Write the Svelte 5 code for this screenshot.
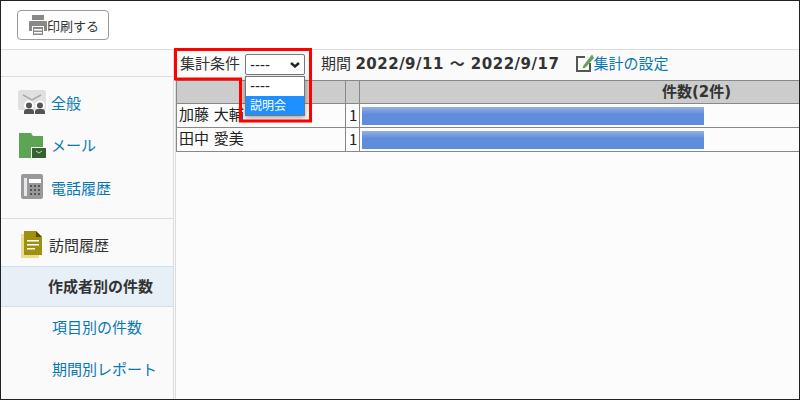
<script>
  const rows = [
    { name: '加藤 大輔', count: 1 },
    { name: '田中 愛美', count: 1 }
  ];
</script>

<div class="page">
  <header class="toolbar">
    <button type="button" class="print-button">
      <svg width="18" height="20" viewBox="0 0 18 20">
        <rect x="3" y="0" width="12" height="5" fill="#888" />
        <path d="M1 6h16a1 1 0 0 1 1 1v9h-3v-5H3v5H0V7a1 1 0 0 1 1-1z" fill="#888" />
        <path d="M4 12h10v8H4z" fill="#888" />
        <path d="M5 14h8v1.500H5zM5 17h8v1.500H5z" fill="#fff" />
      </svg>
      印刷する
    </button>
  </header>

  <div class="body">
    <aside class="sidebar">
      <div class="side-top"></div>
      <nav class="group first">
        <a class="nav-item">
          <svg class="icon" width="28" height="24" viewBox="0 0 28 24">
            <rect x="0" y="0" width="28" height="20" rx="2" fill="#e0e0e0" />
            <path d="M5 5l9 5 9-5" fill="none" stroke="#aaa" stroke-width="1.500" />
            <circle cx="11" cy="15.500" r="5" fill="#fff" />
            <circle cx="22" cy="15.500" r="5" fill="#fff" />
            <circle cx="11" cy="15.500" r="3" fill="#555" />
            <circle cx="22" cy="15.500" r="3" fill="#555" />
            <path d="M6 24v-2a3 3 0 0 1 3-3h4a3 3 0 0 1 3 3v2zM17 24v-2a3 3 0 0 1 3-3h4a3 3 0 0 1 3 3v2z" fill="#555" />
          </svg>
          全般
        </a>
        <a class="nav-item">
          <svg class="icon" width="28" height="26" viewBox="0 0 28 26">
            <path d="M1 1h12l2 3h10v22H1z" fill="#5ca552" />
            <rect x="13" y="15" width="15" height="11" fill="#fff" />
            <rect x="14" y="16" width="14" height="10" fill="#35622f" />
            <path d="M18 19l3 2 3-2" fill="none" stroke="#c5d8c2" stroke-width="1" />
          </svg>
          メール
        </a>
        <a class="nav-item">
          <svg class="icon" width="28" height="26" viewBox="0 0 28 26">
            <rect x="3" y="0" width="22" height="25" rx="2" fill="#999" />
            <rect x="6" y="4" width="3" height="18" fill="#e4e8ee" />
            <rect x="11" y="5" width="12" height="4" fill="#fff" />
            <g fill="#555">
              <rect x="12" y="11" width="2" height="2" /><rect x="16" y="11" width="2" height="2" /><rect x="20" y="11" width="2" height="2" />
              <rect x="12" y="15" width="2" height="2" /><rect x="16" y="15" width="2" height="2" /><rect x="20" y="15" width="2" height="2" />
              <rect x="12" y="19" width="2" height="2" /><rect x="16" y="19" width="2" height="2" /><rect x="20" y="19" width="2" height="2" />
            </g>
          </svg>
          電話履歴
        </a>
      </nav>
      <nav class="group">
        <div class="nav-head">
          <svg width="21" height="27" viewBox="0 0 21 27">
            <rect x="0" y="3" width="18" height="24" fill="#e9dd92" />
            <path d="M3 0h12l6 6v18H3z" fill="#a09012" />
            <path d="M15 0l6 6h-6z" fill="#5a5008" />
            <path d="M6 9h12v1.500H6zM6 13h12v1.500H6zM6 17h8v1.500H6z" fill="#fff" />
          </svg>
          訪問履歴
        </div>
        <a class="sub-item active">作成者別の件数</a>
        <a class="sub-item">項目別の件数</a>
        <a class="sub-item">期間別レポート</a>
      </nav>
    </aside>

    <main class="main">
      <div class="filter-bar">
        <label class="cond">
          <span class="label">集計条件</span>
          <span class="select-wrap">
            <select>
              <option>----</option>
              <option>説明会</option>
            </select>
            <svg class="chevron" width="10" height="6" viewBox="0 0 10 6">
              <path d="M1 1l4 3.500L9 1" fill="none" stroke="#222" stroke-width="2.400" />
            </svg>
          </span>
        </label>
        <span class="label period">期間 <b>2022/9/11 ～ 2022/9/17</b></span>
        <a class="label settings">
          <svg width="18" height="18" viewBox="0 0 18 18">
            <path d="M9 3H1v14h13V9" fill="none" stroke="#555" stroke-width="2" />
            <path d="M7.500 11.500l-1 3 3-1L18 4l-2-3.500z" fill="#5ca552" />
          </svg>
          集計の設定
        </a>
      </div>

      <table>
        <colgroup>
          <col class="c-name" />
          <col class="c-num" />
          <col />
        </colgroup>
        <thead>
          <tr><th></th><th></th><th class="total">件数(2件)</th></tr>
        </thead>
        <tbody>
          {#each rows as row}
            <tr>
              <td class="name">{row.name}</td>
              <td class="num">{row.count}</td>
              <td class="bar-cell"><div class="bar"></div></td>
            </tr>
          {/each}
        </tbody>
      </table>
    </main>
  </div>

  <!-- callouts laid over the screenshot -->
  <ul class="dropdown">
    <li class="dashes">----</li>
    <li class="selected">説明会</li>
  </ul>
  <svg class="callout" width="800" height="400" viewBox="0 0 800 400">
    <path d="M175.500 49.500H310.500V121H240.500V79H175.500Z" fill="none" stroke="#f00" stroke-width="3" />
  </svg>
</div>

<style>
  :global(body) {
    margin: 0;
  }

  .page {
    position: relative;
    box-sizing: border-box;
    width: 800px;
    height: 400px;
    overflow: hidden;
    display: flex;
    flex-direction: column;
    border: 1px solid #222;
    background: #fff;
    color: #333;
    font-family: "Noto Sans CJK JP", sans-serif;
    font-size: 15px;
  }

  .toolbar {
    flex: none;
    height: 49px;
    box-sizing: border-box;
    padding: 9px 0 0 16px;
    border-bottom: 1px solid #ddd;
  }

  .print-button {
    appearance: none;
    display: flex;
    align-items: center;
    box-sizing: border-box;
    width: 92px;
    height: 30px;
    padding: 0 0 0 11px;
    border: 1px solid #999;
    border-radius: 4px;
    background: #fff;
    color: #333;
    font: inherit;
    font-size: 13px;
  }

  .body {
    flex: 1;
    min-height: 0;
    display: flex;
  }

  .sidebar {
    flex: none;
    box-sizing: border-box;
    width: 175px;
    background: #fafafa;
    border-right: 3px double #ddd;
  }

  .side-top {
    box-sizing: border-box;
    height: 27px;
    border-bottom: 1px solid #ddd;
  }

  .group.first {
    height: 142px;
    box-sizing: border-box;
    padding-top: 4px;
    border-bottom: 1px solid #ddd;
  }

  .nav-item {
    display: flex;
    align-items: center;
    gap: 5px;
    height: 42.500px;
    padding-left: 17px;
    color: #0a78b4;
  }

  .nav-head {
    display: flex;
    align-items: center;
    gap: 7px;
    height: 47px;
    box-sizing: border-box;
    padding: 4px 0 0 20px;
  }

  .sub-item {
    display: flex;
    align-items: center;
    box-sizing: border-box;
    height: 42px;
    padding: 0 0 4px 51px;
    color: #0a78b4;
  }

  .sub-item.active {
    height: 41px;
    padding: 0 0 3px 47px;
    background: #e6f0f6;
    border-block: 1px solid #cfe0ea;
    color: #333;
    font-weight: 700;
  }

  .main {
    flex: 1;
    min-width: 0;
    background: #fcfcfc;
  }

  .filter-bar {
    display: flex;
    align-items: center;
    box-sizing: border-box;
    height: 30px;
    padding-bottom: 1px;
    background: #fafafa;
  }

  .label {
    padding-bottom: 4px;
  }

  .cond {
    display: flex;
    align-items: center;
    gap: 5px;
    padding-left: 4px;
  }

  .select-wrap {
    position: relative;
    display: block;
    height: 21px;
  }

  select {
    appearance: none;
    display: block;
    box-sizing: border-box;
    width: 60px;
    height: 21px;
    padding: 0 0 0 4px;
    border: 1px solid #777;
    border-radius: 2px;
    background: #fff;
    color: #222;
    font-family: "Liberation Sans", sans-serif;
    font-size: 15px;
  }

  .chevron {
    position: absolute;
    left: 45px;
    top: 8px;
    pointer-events: none;
  }

  .period {
    margin-left: 16px;
  }

  .period b {
    margin-left: 1px;
    font-family: "DejaVu Sans", "Noto Sans CJK JP", sans-serif;
    font-size: 15px;
    letter-spacing: 0.5px;
  }

  .settings {
    display: flex;
    align-items: center;
    margin-left: 17px;
    color: #0a78b4;
  }

  .settings svg {
    margin-right: -1px;
  }

  table {
    width: 100%;
    table-layout: fixed;
    border-collapse: collapse;
    font-size: 15px;
    line-height: 20px;
  }

  .c-name {
    width: 169px;
  }

  .c-num {
    width: 14px;
  }

  th,
  td {
    box-sizing: border-box;
    padding: 0;
    border: 1px solid #888;
  }

  th:last-child,
  td:last-child {
    border-right: 0;
  }

  th {
    height: 23px;
    background: #ccc;
    font-size: 15px;
    text-align: center;
  }

  th.total {
    padding-left: 234px;
    font-family: "DejaVu Sans", "Noto Sans CJK JP", sans-serif;
  }

  td {
    height: 24px;
    color: #222;
  }

  td.name {
    padding: 0 0 3px 2px;
    word-spacing: 1.500px;
  }

  td.num {
    padding: 0 0 1px 3px;
  }

  td.bar-cell {
    padding-left: 2px;
  }

  .bar {
    width: 342px;
    height: 18px;
    background: linear-gradient(#94b1e3, #5f8ddb 40%);
  }

  .dropdown {
    position: absolute;
    left: 244px;
    top: 75px;
    box-sizing: border-box;
    width: 60px;
    height: 40px;
    margin: 0;
    padding: 0;
    list-style: none;
    border: 1px solid #777;
    background: #fff;
    box-shadow: 0 2px 5px rgba(0, 0, 0, 0.35);
    font-size: 12px;
    color: #222;
  }

  .dropdown li {
    height: 19px;
    line-height: 18px;
    padding-left: 4px;
  }

  .dropdown .dashes {
    font-family: "Liberation Sans", sans-serif;
    font-size: 15px;
  }

  .dropdown .selected {
    background: #1e90ff;
    color: #fff;
  }

  .callout {
    position: absolute;
    left: -1px;
    top: -1px;
    pointer-events: none;
  }
</style>
